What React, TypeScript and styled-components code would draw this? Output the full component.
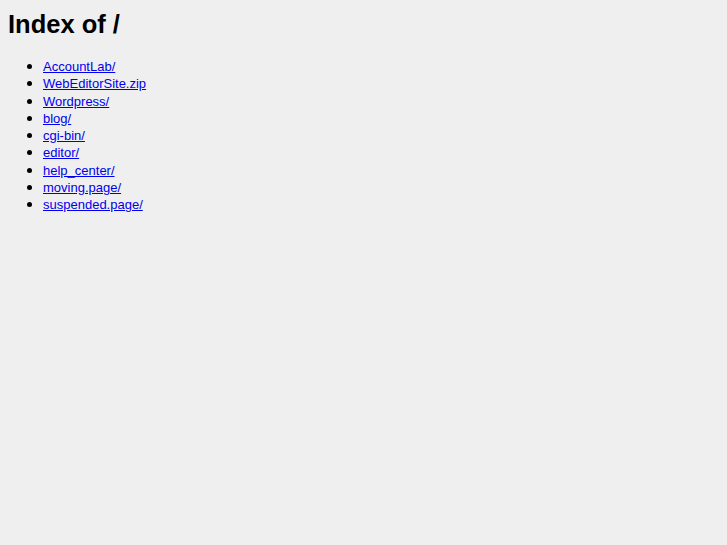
import styled, { createGlobalStyle } from "styled-components";

const GlobalStyle = createGlobalStyle`
  html, body {
    background: #efefef;
  }
  body {
    margin: 8px;
    font-family: "Liberation Sans", Arial, sans-serif;
    font-size: 13px;
    color: #000;
  }
`;

const Title = styled.h1`
  font-size: 25.5px;
  font-weight: bold;
  margin: 2px 0 19px;
  line-height: 28px;
`;

const List = styled.ul`
  margin: 0;
  padding-left: 35px;
  list-style: disc;
`;

const Item = styled.li`
  height: 17.3px;
  line-height: 17.3px;

  &::marker {
    font-size: 15px;
  }
`;

const Link = styled.a`
  color: #0000ee;
  text-decoration: underline;
`;

const entries = [
  "AccountLab/",
  "WebEditorSite.zip",
  "Wordpress/",
  "blog/",
  "cgi-bin/",
  "editor/",
  "help_center/",
  "moving.page/",
  "suspended.page/",
];

function App() {
  return (
    <>
      <GlobalStyle />
      <Title>Index of /</Title>
      <List>
        {entries.map((name) => (
          <Item key={name}>
            <Link href={"#" + name}>{name}</Link>
          </Item>
        ))}
      </List>
    </>
  );
}

export default App;
